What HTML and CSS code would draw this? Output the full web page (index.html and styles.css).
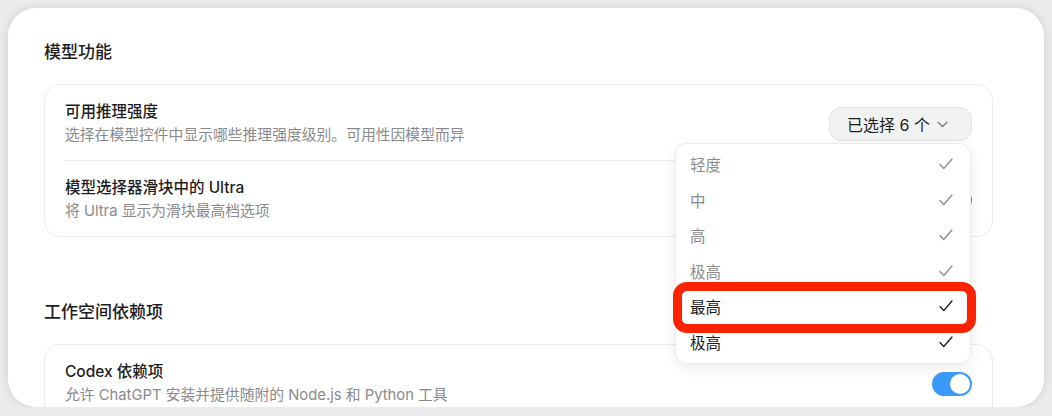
FILE: index.html
```html
<!DOCTYPE html>
<html lang="zh-CN">
<head>
    <meta charset="UTF-8">
    <meta name="viewport" content="width=device-width, initial-scale=1.0">
    <title>设置</title>
    <link rel="stylesheet" href="styles.css">
</head>
<body>
    <div class="panel">
        <section class="section">
            <h2 class="section-title">模型功能</h2>
            <div class="card">
                <div class="row">
                    <div class="row-text">
                        <div class="row-title">可用推理强度</div>
                        <div class="row-sub">选择在模型控件中显示哪些推理强度级别。可用性因模型而异</div>
                    </div>
                    <div class="picker">
                        <button class="picker-button">已选择 6 个
                            <svg class="chevron" width="11" height="7" viewBox="0 0 11 7"><path d="M1 1.2 L5.5 5.5 L10 1.2" fill="none" stroke="#7a7a7a" stroke-width="1.3" stroke-linecap="round" stroke-linejoin="round"/></svg>
                        </button>
                        <ul class="menu">
                            <li class="menu-item">轻度<svg class="check" width="14" height="12" viewBox="0 0 14 12"><path d="M1 6.5 L4.8 10.5 L13 1" fill="none" stroke="currentColor" stroke-width="1.3" stroke-linecap="round" stroke-linejoin="round"/></svg></li>
                            <li class="menu-item">中<svg class="check" width="14" height="12" viewBox="0 0 14 12"><path d="M1 6.5 L4.8 10.5 L13 1" fill="none" stroke="currentColor" stroke-width="1.3" stroke-linecap="round" stroke-linejoin="round"/></svg></li>
                            <li class="menu-item">高<svg class="check" width="14" height="12" viewBox="0 0 14 12"><path d="M1 6.5 L4.8 10.5 L13 1" fill="none" stroke="currentColor" stroke-width="1.3" stroke-linecap="round" stroke-linejoin="round"/></svg></li>
                            <li class="menu-item">极高<svg class="check" width="14" height="12" viewBox="0 0 14 12"><path d="M1 6.5 L4.8 10.5 L13 1" fill="none" stroke="currentColor" stroke-width="1.3" stroke-linecap="round" stroke-linejoin="round"/></svg></li>
                            <li class="menu-item active">最高<svg class="check" width="14" height="12" viewBox="0 0 14 12"><path d="M1 6.5 L4.8 10.5 L13 1" fill="none" stroke="currentColor" stroke-width="1.3" stroke-linecap="round" stroke-linejoin="round"/></svg>
                                <span class="highlight"></span>
                            </li>
                            <li class="menu-item active">极高<svg class="check" width="14" height="12" viewBox="0 0 14 12"><path d="M1 6.5 L4.8 10.5 L13 1" fill="none" stroke="currentColor" stroke-width="1.3" stroke-linecap="round" stroke-linejoin="round"/></svg></li>
                        </ul>
                    </div>
                </div>
                <div class="row divided">
                    <div class="row-text">
                        <div class="row-title">模型选择器滑块中的 Ultra</div>
                        <div class="row-sub">将 Ultra 显示为滑块最高档选项</div>
                    </div>
                    <span class="toggle on"></span>
                </div>
            </div>
        </section>

        <section class="section">
            <h2 class="section-title">工作空间依赖项</h2>
            <div class="card">
                <div class="row">
                    <div class="row-text">
                        <div class="row-title">Codex 依赖项</div>
                        <div class="row-sub">允许 ChatGPT 安装并提供随附的 Node.js 和 Python 工具</div>
                    </div>
                    <span class="toggle on"></span>
                </div>
            </div>
        </section>
    </div>
</body>
</html>
```

FILE: styles.css
```css
body {
    margin: 0;
    padding: 8px 8px 0;
    background: #ebebeb;
    font-family: Inter, "Noto Sans CJK SC", sans-serif;
    color: #1d1d1f;
    overflow: hidden;
}
.panel {
    height: 399px;
    box-sizing: border-box;
    background: #fff;
    border-radius: 28px;
    box-shadow: 0 0 10px rgba(0, 0, 0, 0.12);
    padding: 32px 51px 0 36px;
    overflow: hidden;
}
.section {
    margin-bottom: 63px;
}
.section-title {
    margin: 0 0 20px;
    font-size: 17px;
    line-height: 24px;
    font-weight: 500;
}
.card {
    border: 1px solid #ebebeb;
    border-radius: 16px;
}
.row {
    display: flex;
    align-items: center;
    justify-content: space-between;
    margin: 0 20px;
    padding: 16px 0 14px;
}
.divided {
    border-top: 1px solid #ededed;
}
.row-title {
    font-size: 15.5px;
    line-height: 22px;
    font-weight: 500;
}
.row-sub {
    margin-top: 1px;
    font-size: 14.8px;
    line-height: 22px;
    color: #8a8a8a;
}
.picker {
    position: relative;
}
.picker-button {
    display: flex;
    align-items: center;
    gap: 7px;
    height: 34px;
    width: 143px;
    padding: 0 0 0 17px;
    border: 1px solid #e2e2e2;
    border-radius: 12px;
    background: #f1f2f2;
    font-family: inherit;
    font-size: 16px;
    color: #1d1d1f;
}
.chevron {
    margin-top: 1px;
}
.menu {
    position: absolute;
    right: 1px;
    top: calc(100% + 2px);
    z-index: 2;
    width: 296px;
    box-sizing: border-box;
    margin: 0;
    padding: 3px 0 3px;
    list-style: none;
    background: #fff;
    border: 1px solid #ececec;
    border-radius: 12px;
    box-shadow: 0 4px 14px rgba(0, 0, 0, 0.08);
}
.menu-item {
    position: relative;
    display: flex;
    align-items: center;
    justify-content: space-between;
    height: 35.5px;
    padding: 0 17px 0 14px;
    font-size: 15.5px;
    color: #8c8c8c;
}
.menu-item.active {
    color: #1d1d1f;
}
.highlight {
    position: absolute;
    left: -3px;
    right: -6px;
    top: -7px;
    bottom: -9px;
    border: 9px solid #ff2200;
    border-radius: 14px;
}
.toggle {
    position: relative;
    flex: none;
    width: 40px;
    height: 24px;
    border-radius: 12px;
    background: #d9d9d9;
}
.toggle.on {
    background: #3a9afb;
}
.toggle::after {
    content: "";
    position: absolute;
    top: 2px;
    left: 2px;
    width: 20px;
    height: 20px;
    border-radius: 50%;
    background: #fff;
}
.toggle.on::after {
    left: 18px;
}
```
